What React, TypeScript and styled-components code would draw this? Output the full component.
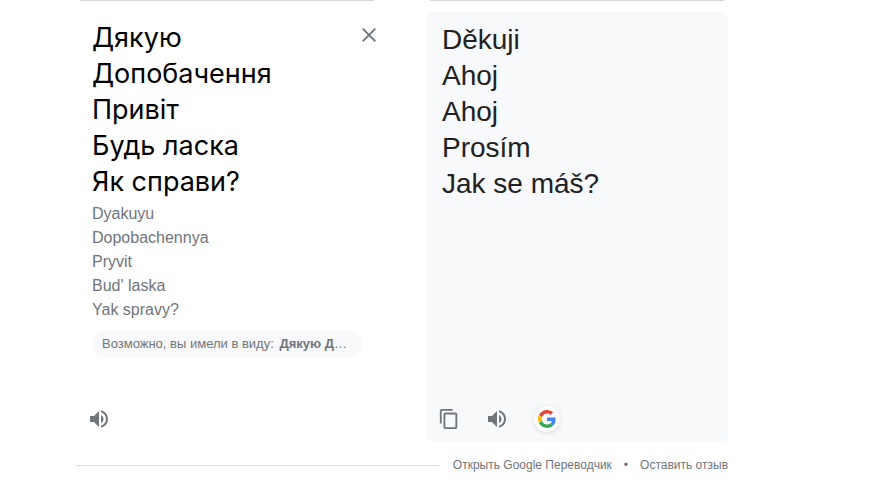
import React from "react";
import styled, { createGlobalStyle } from "styled-components";

const GlobalStyle = createGlobalStyle`
  *, *::before, *::after { box-sizing: border-box; }
  body { margin: 0; background: #fff; font-family: "Liberation Sans", Arial, sans-serif; color: #202124; }
`;

const Page = styled.main`
  padding: 0 144px 8px 76px;
`;

const Columns = styled.div`
  display: grid;
  grid-template-columns: repeat(2, minmax(0, 1fr));
  column-gap: 48px;
`;

const LanguageEdge = styled.div`
  height: 1px;
  margin: 0 4px 11px;
  background: #d5d7da;
`;

const Panel = styled.section<{ $filled?: boolean }>`
  display: flex;
  flex-direction: column;
  min-height: 430px;
  padding: ${(p) => (p.$filled ? "10px 16px 8px" : "8px 0 8px 16px")};
  border-radius: 8px;
  background: ${(p) => (p.$filled ? "#f8f9fa" : "transparent")};
`;

const SourceRow = styled.div`
  display: flex;
  align-items: flex-start;
`;

const SourceText = styled.textarea`
  flex: 1;
  min-width: 0;
  height: 180px;
  padding: 0;
  border: 0;
  outline: 0;
  resize: none;
  overflow: hidden;
  background: transparent;
  color: #000;
  font: 27px/36px Inter, "Open Sans", sans-serif;
`;

const Translation = styled.p`
  margin: 0;
  font-size: 28px;
  line-height: 36px;
  white-space: pre-line;
`;

const Transliteration = styled.p`
  margin: 2px 0 0;
  font-size: 16px;
  line-height: 24px;
  color: #70757a;
  white-space: pre-line;
`;

const IconButton = styled.button`
  display: flex;
  align-items: center;
  justify-content: center;
  width: 30px;
  height: 30px;
  padding: 0;
  border: 0;
  border-radius: 50%;
  background: transparent;
  color: #70757a;
  cursor: pointer;
`;

const ClearButton = styled(IconButton)`
  width: 18px;
`;

const SearchButton = styled(IconButton)`
  width: 26px;
  height: 26px;
  margin-left: 4px;
  background: #fff;
  box-shadow: 0 1px 4px rgba(60, 64, 67, 0.16);
`;

const Suggestion = styled.button`
  width: 270px;
  max-width: 100%;
  height: 28px;
  margin-top: 8px;
  padding: 0 14px 0 10px;
  border: 0;
  border-radius: 14px;
  background: #f8f9fa;
  color: #70757a;
  font: 13px/28px "Liberation Sans", Arial, sans-serif;
  text-align: left;
  white-space: nowrap;
  overflow: hidden;
  text-overflow: ellipsis;
  cursor: pointer;

  b {
    margin-left: 2px;
  }
`;

const Actions = styled.div`
  display: flex;
  align-items: center;
  gap: 18px;
  margin: auto 0 0 -8px;
`;

const Footer = styled.footer`
  display: flex;
  align-items: center;
  margin-top: 15px;
  font-size: 12px;
  line-height: 16px;
  color: #70757a;
`;

const Rule = styled.div`
  flex: 1;
  height: 1px;
  margin-right: 14px;
  background: #dadce0;
`;

const FooterLink = styled.a`
  color: inherit;
  text-decoration: none;
`;

const Dot = styled.span`
  margin: 0 12px;
`;

const CloseIcon = () => (
  <svg width="18" height="18" viewBox="3 3 18 18" fill="none" stroke="currentColor" strokeWidth="1.9" aria-hidden="true">
    <path d="M5.700 5.700l12.600 12.600M18.300 5.700l-12.600 12.600" />
  </svg>
);

const SpeakerIcon = () => (
  <svg width="24" height="24" viewBox="0 0 24 24" fill="currentColor" aria-hidden="true">
    <path d="M3 9v6h4l5 5V4L7 9H3z" />
    <path d="M14 7.970v8.050c1.480-.73 2.500-2.250 2.500-4.020 0-1.770-1.020-3.290-2.500-4.030z" />
    <path d="M14 3.230v2.060c2.890.86 5 3.540 5 6.710s-2.110 5.850-5 6.710v2.060c4.010-.91 7-4.490 7-8.770s-2.990-7.860-7-8.770z" />
  </svg>
);

const CopyIcon = () => (
  <svg width="22" height="22" viewBox="0 0 24 24" fill="currentColor" aria-hidden="true">
    <path d="M16 1H4c-1.100 0-2 .9-2 2v14h2V3h12V1zm3 4H8c-1.100 0-2 .9-2 2v14c0 1.100.9 2 2 2h11c1.100 0 2-.9 2-2V7c0-1.100-.9-2-2-2zm0 16H8V7h11v14z" />
  </svg>
);

const GoogleIcon = () => (
  <svg width="18" height="18" viewBox="0 0 48 48" aria-hidden="true">
    <path fill="#EA4335" d="M24 9.500c3.540 0 6.710 1.220 9.210 3.600l6.850-6.850C35.900 2.380 30.470 0 24 0 14.620 0 6.510 5.380 2.560 13.220l7.980 6.190C12.430 13.720 17.740 9.500 24 9.500z" />
    <path fill="#4285F4" d="M46.980 24.550c0-1.570-.15-3.090-.38-4.550H24v9.020h12.940c-.58 2.960-2.260 5.480-4.780 7.180l7.730 6c4.510-4.180 7.090-10.360 7.090-17.650z" />
    <path fill="#FBBC05" d="M10.530 28.590A14.500 14.500 0 0 1 9.770 24c0-1.600.27-3.140.76-4.590l-7.980-6.190A23.900 23.900 0 0 0 0 24c0 3.880.92 7.540 2.560 10.780l7.970-6.190z" />
    <path fill="#34A853" d="M24 48c6.480 0 11.930-2.130 15.890-5.810l-7.730-6c-2.150 1.450-4.920 2.300-8.160 2.300-6.260 0-11.570-4.220-13.470-9.910l-7.980 6.190C6.510 42.620 14.620 48 24 48z" />
  </svg>
);

const source = ["Дякую", "Допобачення", "Привіт", "Будь ласка", "Як справи?"];
const latin = ["Dyakuyu", "Dopobachennya", "Pryvit", "Bud' laska", "Yak spravy?"];
const translated = ["Děkuji", "Ahoj", "Ahoj", "Prosím", "Jak se máš?"];

export default function App() {
  return (
    <>
      <GlobalStyle />
      <Page>
        <Columns>
          <LanguageEdge />
          <LanguageEdge />
          <Panel>
            <SourceRow>
              <SourceText aria-label="Исходный текст" spellCheck={false} defaultValue={source.join("\n")} />
              <ClearButton type="button" aria-label="Очистить">
                <CloseIcon />
              </ClearButton>
            </SourceRow>
            <Transliteration>{latin.join("\n")}</Transliteration>
            <Suggestion type="button">
              Возможно, вы имели в виду: <b>Дякую До побачення</b>
            </Suggestion>
            <Actions>
              <IconButton type="button" aria-label="Прослушать исходный текст">
                <SpeakerIcon />
              </IconButton>
            </Actions>
          </Panel>
          <Panel $filled>
            <Translation lang="cs">{translated.join("\n")}</Translation>
            <Actions>
              <IconButton type="button" aria-label="Копировать">
                <CopyIcon />
              </IconButton>
              <IconButton type="button" aria-label="Прослушать перевод">
                <SpeakerIcon />
              </IconButton>
              <SearchButton type="button" aria-label="Поиск в Google">
                <GoogleIcon />
              </SearchButton>
            </Actions>
          </Panel>
        </Columns>
        <Footer>
          <Rule />
          <FooterLink href="#translate">Открыть Google Переводчик</FooterLink>
          <Dot>•</Dot>
          <FooterLink href="#feedback">Оставить отзыв</FooterLink>
        </Footer>
      </Page>
    </>
  );
}
